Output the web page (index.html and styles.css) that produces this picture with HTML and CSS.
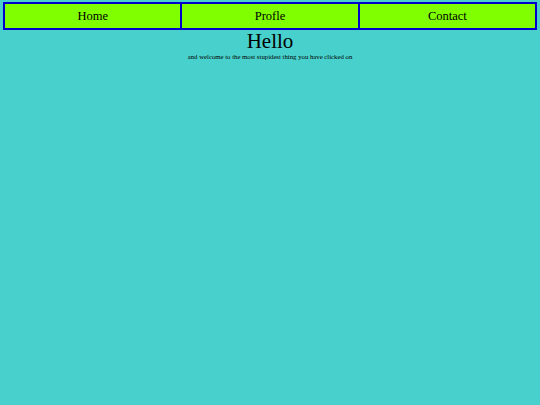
FILE: index.html
```html
<!DOCTYPE html>
<html>
<head>
<meta charset="utf-8">
<link rel="stylesheet" href="styles.css">
</head>
<body>
<nav class="nav">
  <a class="nav-item">Home</a>
  <a class="nav-item">Profle</a>
  <a class="nav-item">Contact</a>
</nav>
<h1 class="title">Hello</h1>
<p class="subtitle">and welcome to the most stupidest thing you have clicked on</p>
</body>
</html>
```
FILE: styles.css
```css
html, body {
  margin: 0;
  padding: 0;
}
body {
  background: #48d1cc;
  font-family: "Liberation Serif", "Times New Roman", serif;
  color: #000;
  padding: 2px 3px;
}
.nav {
  display: grid;
  grid-template-columns: 1fr 1fr 1fr;
  gap: 2px;
  border: 2px solid #0000cd;
  background: #0000cd;
  height: 24px;
}
.nav-item {
  display: flex;
  align-items: center;
  justify-content: center;
  font-size: 12.5px;
  background: #7fff00;
}
.title {
  margin: 0;
  text-align: center;
  font-size: 21px;
  font-weight: normal;
  line-height: 22px;
}
.subtitle {
  margin: 0;
  text-align: center;
  font-size: 6.75px;
  line-height: 10px;
}
```
